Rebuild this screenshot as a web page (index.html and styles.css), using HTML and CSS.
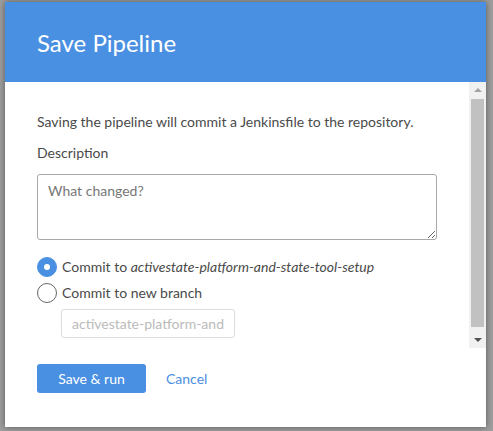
FILE: index.html
```html
<!DOCTYPE html>
<html>
<head>
<meta charset="utf-8">
<link rel="stylesheet" href="styles.css">
</head>
<body>
<div class="dialog">
  <div class="header">Save Pipeline</div>
  <div class="body">
    <div class="scroll">
      <p class="intro">Saving the pipeline will commit a Jenkinsfile to the repository.</p>
      <label class="label">Description</label>
      <textarea class="desc" placeholder="What changed?"></textarea>
      <div class="radios">
        <label class="radio"><span class="dot checked"></span>Commit to&nbsp;<em>activestate-platform-and-state-tool-setup</em></label>
        <label class="radio"><span class="dot"></span>Commit to new branch</label>
        <input class="branch" type="text" placeholder="activestate-platform-and">
      </div>
    </div>
    <div class="scrollbar">
      <div class="sb-btn"><span class="arrow-up"></span></div>
      <div class="sb-thumb"></div>
      <div class="sb-btn"><span class="arrow-down"></span></div>
    </div>
  </div>
  <div class="footer">
    <button class="primary">Save &amp; run</button>
    <a class="cancel">Cancel</a>
  </div>
</div>
</body>
</html>
```
FILE: styles.css
```css
html, body {
  margin: 0;
  padding: 0;
  height: 100%;
}
body {
  background: #9d9d9d;
  font-family: Lato, "Open Sans", sans-serif;
  font-size: 14px;
  color: #4a4a4a;
  padding: 2px 0 0 5px;
  box-sizing: border-box;
}
.dialog {
  width: 481px;
  height: 425px;
  background: #fff;
  box-shadow: 0 0 6px rgba(0,0,0,0.45);
  display: flex;
  flex-direction: column;
}
.header {
  height: 80px;
  flex: none;
  background: #4a90e2;
  color: #fff;
  font-size: 24px;
  display: flex;
  align-items: center;
  padding-left: 32px;
}
.body {
  height: 266px;
  flex: none;
  display: flex;
}
.scroll {
  flex: 1;
  overflow: hidden;
  padding: 0 32px;
}
.scrollbar {
  width: 17px;
  flex: none;
  background: #f1f1f1;
  display: flex;
  flex-direction: column;
}
.sb-btn {
  height: 16px;
  flex: none;
  display: flex;
  align-items: center;
  justify-content: center;
}
.arrow-up {
  width: 0;
  height: 0;
  border-left: 4px solid transparent;
  border-right: 4px solid transparent;
  border-bottom: 4px solid #a3a3a3;
}
.arrow-down {
  width: 0;
  height: 0;
  border-left: 4px solid transparent;
  border-right: 4px solid transparent;
  border-top: 4px solid #505050;
}
.sb-thumb {
  flex: 1;
  margin: 1px 2px 5px;
  background: #c1c1c1;
}
.intro {
  margin: 30px 0 0;
  line-height: 20px;
}
.label {
  display: block;
  margin-top: 11px;
  line-height: 20px;
}
.desc {
  display: block;
  margin-top: 11px;
  width: 400px;
  height: 66px;
  box-sizing: border-box;
  border: 1px solid #a9a9a9;
  border-radius: 3px;
  padding: 7px 10px;
  font-family: inherit;
  font-size: 14px;
  color: #4a4a4a;
  resize: vertical;
}
.desc::placeholder { color: #777; }
.radios {
  margin-top: 14px;
}
.radio {
  display: flex;
  align-items: center;
  height: 26px;
  line-height: 20px;
  color: #4a4a4a;
}
.dot {
  width: 20px;
  height: 20px;
  box-sizing: border-box;
  border: 1px solid #666;
  border-radius: 50%;
  margin-right: 5px;
  flex: none;
  display: flex;
  align-items: center;
  justify-content: center;
}
.dot.checked {
  background: #4a90e2;
  border-color: #4a90e2;
}
.dot.checked::after {
  content: "";
  width: 6px;
  height: 6px;
  border-radius: 50%;
  background: #fff;
}
em { font-style: italic; }
.branch {
  display: block;
  margin: 3px 0 0 24px;
  width: 174px;
  height: 29px;
  box-sizing: border-box;
  border: 1px solid #ddd;
  border-radius: 3px;
  padding: 0 10px;
  font-family: inherit;
  font-size: 14px;
}
.branch::placeholder { color: #bbb; }
.footer {
  flex: 1;
  display: flex;
  align-items: flex-start;
  padding: 16px 32px 0;
  gap: 20px;
}
.primary {
  width: 109px;
  height: 29px;
  background: #4a90e2;
  border: none;
  border-radius: 3px;
  color: #fff;
  font-family: inherit;
  font-size: 14px;
}
.cancel {
  color: #4a90e2;
  line-height: 29px;
}
```
